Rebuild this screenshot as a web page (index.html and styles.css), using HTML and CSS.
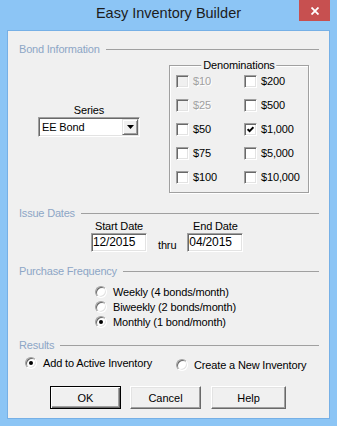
FILE: index.html
```html
<!DOCTYPE html>
<html lang="en">
<head>
  <meta charset="UTF-8" />
  <meta name="viewport" content="width=device-width, initial-scale=1.0"/>
  <title>Easy Inventory Builder</title>
  <link rel="stylesheet" href="styles.css">
</head>
<body>
  <div class="window">
    <div class="titlebar">
      <span class="title">Easy Inventory Builder</span>
      <span class="close">
        <svg width="8" height="8" viewBox="0 0 8 8"><path d="M0.5 0.5 L7.5 7.5 M7.5 0.5 L0.5 7.5" stroke="#fff" stroke-width="1.8" fill="none"/></svg>
      </span>
    </div>

    <div class="client">
      <!-- bond information -->
      <div class="group-head"><span>Bond Information</span><i></i></div>
      <div class="bond-body">
        <div class="series">
          <div class="series-label">Series</div>
          <div class="select">
            <span>EE Bond</span>
            <span class="drop">
              <svg width="7" height="4" viewBox="0 0 7 4"><path d="M0 0 H7 L3.5 4 Z" fill="#000"/></svg>
            </span>
          </div>
        </div>
        <div class="groupbox">
          <span class="groupbox-title">Denominations</span>
          <div class="denoms">
            <label class="check disabled"><span class="box"></span>$10</label>
            <label class="check"><span class="box"></span>$200</label>
            <label class="check disabled"><span class="box"></span>$25</label>
            <label class="check"><span class="box"></span>$500</label>
            <label class="check"><span class="box"></span>$50</label>
            <label class="check"><span class="box">
              <svg width="7" height="7" viewBox="0 0 7 7"><path d="M0.6 3.2 L2.6 5.2 L6.4 1.2" stroke="#000" stroke-width="1.9" fill="none"/></svg>
            </span>$1,000</label>
            <label class="check"><span class="box"></span>$75</label>
            <label class="check"><span class="box"></span>$5,000</label>
            <label class="check"><span class="box"></span>$100</label>
            <label class="check"><span class="box"></span>$10,000</label>
          </div>
        </div>
      </div>

      <!-- issue dates -->
      <div class="group-head issue"><span>Issue Dates</span><i></i></div>
      <div class="dates">
        <div class="date-col">
          <div class="date-label">Start Date</div>
          <div class="date-input">12/2015</div>
        </div>
        <span class="thru">thru</span>
        <div class="date-col">
          <div class="date-label">End Date</div>
          <div class="date-input">04/2015</div>
        </div>
      </div>

      <!-- purchase frequency -->
      <div class="group-head purchase"><span>Purchase Frequency</span><i></i></div>
      <div class="radios">
        <div class="radio-row"><span class="radio"></span>Weekly (4 bonds/month)</div>
        <div class="radio-row"><span class="radio"></span>Biweekly (2 bonds/month)</div>
        <div class="radio-row"><span class="radio"><b class="dot"></b></span>Monthly (1 bond/month)</div>
      </div>

      <!-- results -->
      <div class="group-head results"><span>Results</span><i></i></div>
      <div class="results-row">
        <div class="radio-row"><span class="radio"><b class="dot"></b></span>Add to Active Inventory</div>
        <div class="radio-row second"><span class="radio"></span>Create a New Inventory</div>
      </div>

      <div class="buttons">
        <button class="btn default ok">OK</button>
        <button class="btn cancel">Cancel</button>
        <button class="btn help">Help</button>
      </div>
    </div>
  </div>
</body>
</html>
```

FILE: styles.css
```css
* {
  margin: 0;
  padding: 0;
  box-sizing: border-box;
}

body {
  background: #8cc5f5;
  width: 337px;
  height: 426px;
  overflow: hidden;
  font-family: "Liberation Sans", Arial, sans-serif;
  font-size: 11px;
  letter-spacing: -0.15px;
  color: #000;
}

.window {
  padding: 0 7px 7px;
}

.titlebar {
  height: 30px;
  position: relative;
  text-align: center;
}

.title {
  font-size: 14.5px;
  line-height: 27px;
  letter-spacing: 0;
  color: #1c1c1c;
}

.close {
  position: absolute;
  top: 0;
  right: 0;
  width: 31px;
  height: 21px;
  background: #c75050;
  display: flex;
  align-items: center;
  justify-content: center;
}

.client {
  height: 389px;
  border: 1px solid #76b0e6;
  background: #f0f0f0;
  padding: 11px 10px 0 11px;
}

.group-head {
  display: flex;
  align-items: center;
  height: 14px;
  line-height: 14px;
  color: #8da6c6;
  letter-spacing: -0.2px;
}

.group-head i {
  flex: 1;
  height: 1px;
  margin-left: 6px;
  background: #a0a0a0;
}

/* bond information */
.bond-body {
  display: flex;
  align-items: flex-start;
}

.series {
  width: 102px;
  margin: 48px 0 0 19px;
  display: flex;
  flex-direction: column;
  align-items: center;
}

.series-label {
  line-height: 13px;
}

.select {
  width: 102px;
  height: 20px;
  display: flex;
  align-items: center;
  padding-left: 3px;
  background: #fff;
  border: 1px solid;
  border-color: #a0a0a0 #fff #fff #a0a0a0;
  box-shadow: inset 1px 1px 0 #696969, inset -1px -1px 0 #e3e3e3;
}

.drop {
  margin-left: auto;
  margin-right: 1px;
  width: 16px;
  height: 16px;
  display: flex;
  align-items: center;
  justify-content: center;
  background: #f0f0f0;
  border: 1px solid;
  border-color: #e3e3e3 #696969 #696969 #e3e3e3;
  box-shadow: inset 1px 1px 0 #fff, inset -1px -1px 0 #a0a0a0;
}

.groupbox {
  position: relative;
  width: 140px;
  height: 128px;
  margin: 9px 0 0 29px;
  border: 1px solid #a0a0a0;
  box-shadow: 1px 1px 0 #fff, inset 1px 1px 0 #fff;
}

.groupbox-title {
  position: absolute;
  top: -7px;
  left: 50%;
  transform: translateX(-50%);
  padding: 0 2px;
  line-height: 13px;
  background: #f0f0f0;
}

.denoms {
  display: grid;
  grid-template-columns: 68px auto;
  grid-auto-rows: 24px;
  align-items: center;
  padding: 3px 0 0 6px;
}

.check {
  display: flex;
  align-items: center;
  gap: 4px;
}

.box {
  width: 13px;
  height: 13px;
  display: flex;
  align-items: center;
  justify-content: center;
  background: #fff;
  border: 1px solid;
  border-color: #a0a0a0 #fff #fff #a0a0a0;
  box-shadow: inset 1px 1px 0 #696969, inset -1px -1px 0 #e3e3e3;
}

.check.disabled {
  color: #a0a0a0;
  text-shadow: 1px 1px 0 #fff;
}

.check.disabled .box {
  background: #f0f0f0;
}

/* issue dates */
.issue {
  margin-top: 13px;
}

.dates {
  display: flex;
  align-items: flex-end;
  margin-left: 72px;
}

.date-col {
  width: 56px;
  display: flex;
  flex-direction: column;
  align-items: center;
}

.date-label {
  line-height: 13px;
}

.date-input {
  width: 56px;
  height: 19px;
  line-height: 17px;
  padding-left: 1px;
  font-size: 12px;
  background: #fff;
  border: 1px solid;
  border-color: #a0a0a0 #fff #fff #a0a0a0;
  box-shadow: inset 1px 1px 0 #696969, inset -1px -1px 0 #e3e3e3;
}

.thru {
  line-height: 13px;
  margin: 0 11px 0 11px;
}

/* purchase frequency */
.purchase {
  margin-top: 12px;
}

.radios {
  margin: 6px 0 0 76px;
}

.radio-row {
  display: flex;
  align-items: center;
  gap: 6px;
  height: 15px;
}

.radio {
  width: 12px;
  height: 12px;
  flex-shrink: 0;
  border-radius: 50%;
  display: flex;
  align-items: center;
  justify-content: center;
  background: #fff;
  border: 1px solid;
  border-color: #a0a0a0 #fff #fff #a0a0a0;
  box-shadow: inset 1px 1px 0 #696969, inset -1px -1px 0 #e3e3e3;
}

.dot {
  width: 4px;
  height: 4px;
  border-radius: 50%;
  background: #000;
}

/* results */
.results {
  margin-top: 9px;
}

.results-row {
  display: grid;
  grid-template-columns: 151px auto;
  margin: 3px 0 0 6px;
}

.results-row .second {
  margin-top: 2px;
}

.buttons {
  display: flex;
  margin-top: 14px;
  padding-left: 31px;
}

.btn {
  height: 23px;
  font-family: "Liberation Sans", Arial, sans-serif;
  font-size: 11px;
  color: #000;
  background: #f0f0f0;
  border: 1px solid;
  border-color: #fff #696969 #696969 #fff;
  box-shadow: inset -1px -1px 0 #a0a0a0, inset 1px 1px 0 #e3e3e3;
}

.btn.default {
  border-color: #000;
  box-shadow: inset 1px 1px 0 #fff, inset -1px -1px 0 #696969, inset -2px -2px 0 #a0a0a0;
}

.ok {
  width: 71px;
}

.cancel {
  width: 71px;
  margin-left: 9px;
}

.help {
  width: 75px;
  margin-left: 10px;
}
```
